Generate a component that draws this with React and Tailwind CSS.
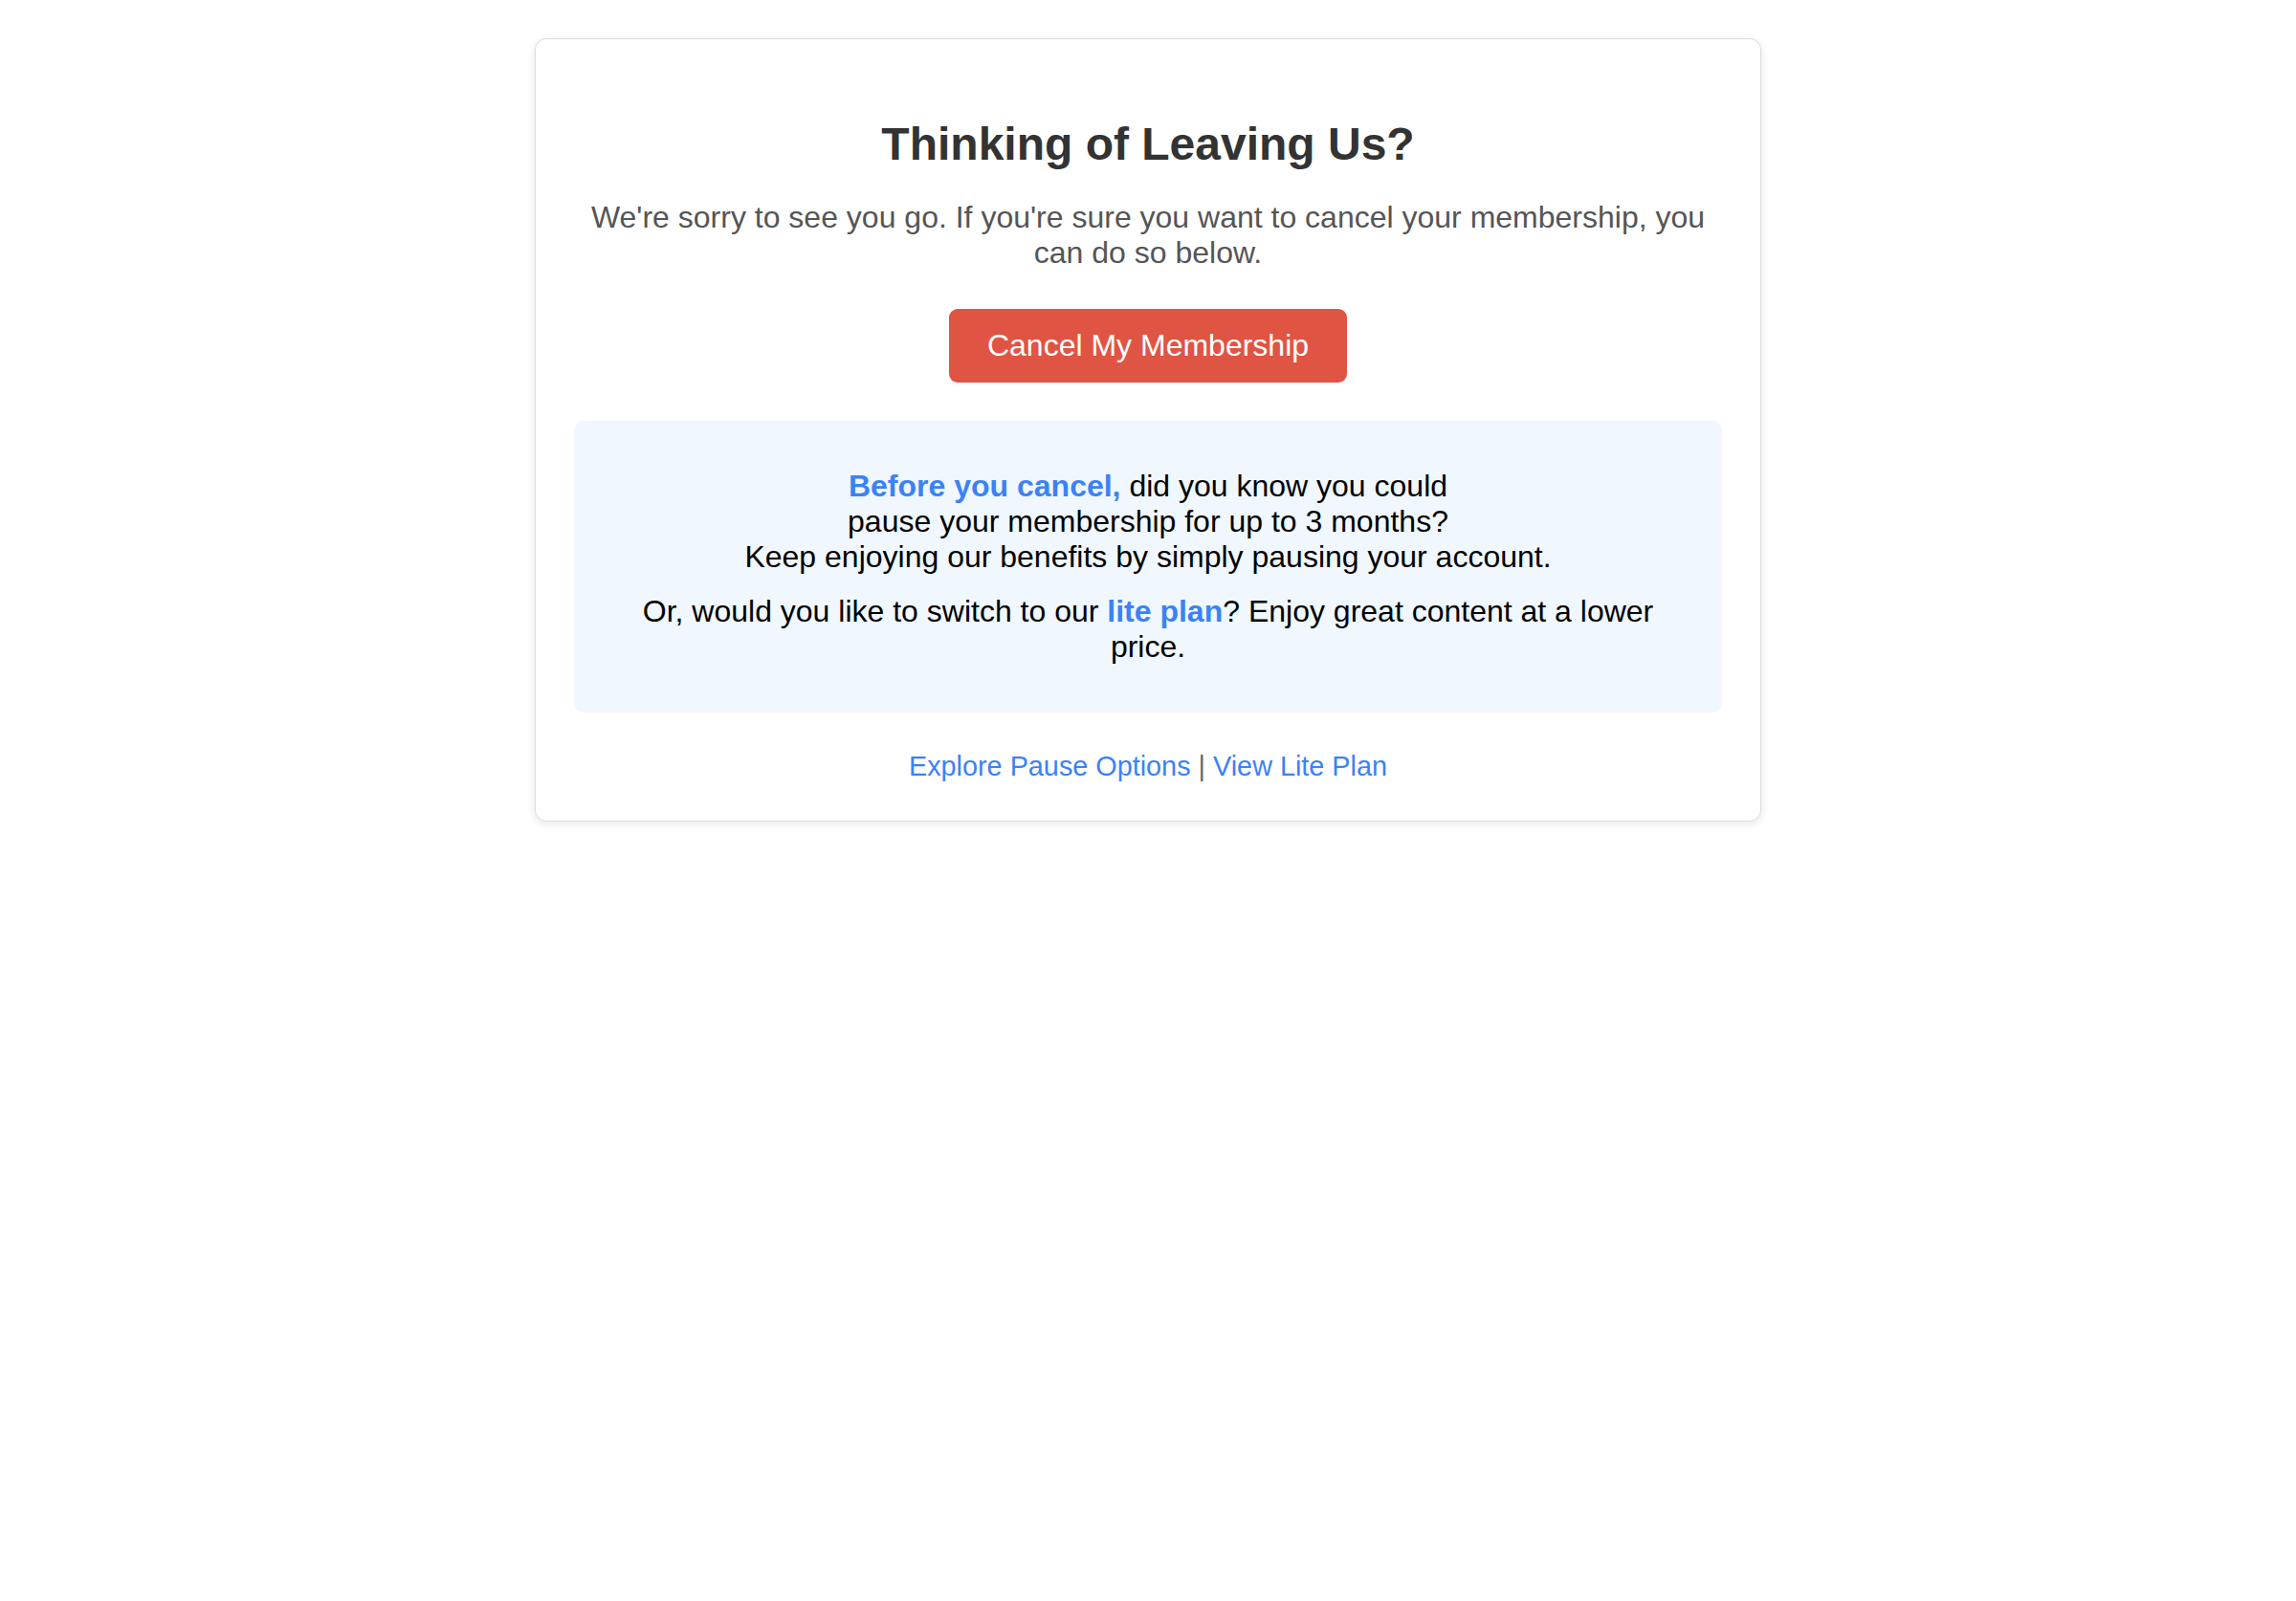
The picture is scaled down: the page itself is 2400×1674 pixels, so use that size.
import React from 'react';

// Cancellation / retention card
export default function App() {
  return (
    <div className="min-h-screen bg-white font-['Liberation_Sans',Arial,Helvetica,sans-serif]">
      <div className="mx-auto mt-[40px] w-[1282px] rounded-[12px] border border-[#dddddd] bg-white p-[40px] text-center shadow-[0_2px_8px_rgba(0,0,0,0.1)]">
        <h1 className="mt-[42px] text-[48px] font-bold leading-[55px] text-[#333333]">
          Thinking of Leaving Us?
        </h1>
        <p className="mt-[31px] text-[32px] leading-[37px] text-[#555555]">
          We're sorry to see you go. If you're sure you want to cancel your membership, you can do so below.
        </p>

        <button
          type="button"
          className="mt-[40px] rounded-[9px] bg-[#e05444] px-[40px] py-[20px] text-[32px] leading-[37px] text-white"
        >
          Cancel My Membership
        </button>

        {/* Retention offer */}
        <div className="mt-[40px] rounded-[10px] bg-[#f0f7fe] px-[32px] py-[30px] text-[32px] leading-[37px] text-black">
          <p className="my-[20px]">
            <span className="font-bold text-[#3b82f6]">Before you cancel,</span> did you know you could
            <br />
            pause your membership for up to 3 months?
            <br />
            Keep enjoying our benefits by simply pausing your account.
          </p>
          <p className="my-[20px]">
            Or, would you like to switch to our <span className="font-bold text-[#3b82f6]">lite plan</span>? Enjoy great content at a lower price.
          </p>
        </div>

        <div className="mt-[40px] text-[28.8px] leading-[33px] text-[#666666]">
          <a href="#" className="text-[#3b82f6]">Explore Pause Options</a>
          {' | '}
          <a href="#" className="text-[#3b82f6]">View Lite Plan</a>
        </div>
      </div>
    </div>
  );
}
